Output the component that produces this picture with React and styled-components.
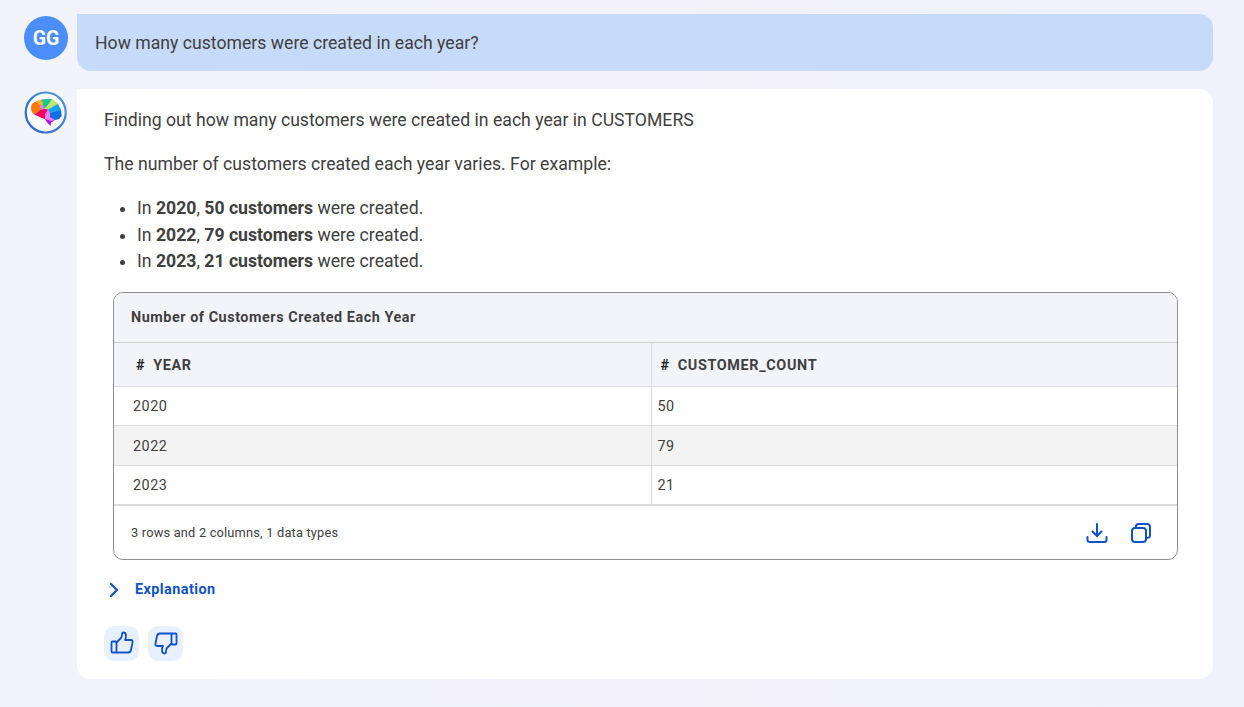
import styled, { createGlobalStyle } from "styled-components"

const rows = [
    { year: "2020", count: "50" },
    { year: "2022", count: "79" },
    { year: "2023", count: "21" },
]

const GlobalStyle = createGlobalStyle`
    html, body {
        margin: 0;
        padding: 0;
    }

    body {
        font-family: Roboto, "Liberation Sans", sans-serif;
        color: #404040;
    }

    * {
        box-sizing: border-box;
    }
`

function BrainLogo() {
    return (
        <svg width="44" height="44" viewBox="0 0 44 44">
            <defs>
                <linearGradient id="ring" x1="1" y1="0" x2="0" y2="1">
                    <stop offset="0" stopColor="#4f9bd6" />
                    <stop offset="1" stopColor="#2a62cf" />
                </linearGradient>
            </defs>
            <circle cx="21.7" cy="21.5" r="20" fill="#fff" stroke="url(#ring)" strokeWidth="2.2" />
            <path d="M7 17 L8 13 L12 10.5 L18 8.5 L28 8 L34 13 L37 19 L37.5 25 L35 28 L31 29 L27 31.5 L26.5 35 L23 31 L21 28 L18 27 L10.5 23.5 L8 21 Z" fill="#f47df0" />
            <path d="M7 17 L8 13 L12 10.5 L16 14 L16.5 19 L10.5 23.5 L8 21 Z" fill="#ff7a00" />
            <path d="M12 10.5 L18 8.5 L19 14 L16 14 Z" fill="#ffb11f" />
            <path d="M18 8.5 L28 8 L24 14 L20 18 L19 14 Z" fill="#0fc98a" />
            <path d="M28 8 L34 13 L24 18.5 L20 18 L24 14 Z" fill="#b8ea6a" />
            <path d="M34 13 L37 19 L26 22 L24 18.5 Z" fill="#10a6ee" />
            <path d="M26 22 L37 19 L37.5 25 L35 28 L31 29 L26 26 Z" fill="#0a6fe0" />
            <path d="M10.5 23.5 L16.5 19 L20 18 L24 18.5 L21 23 L21 28 L18 27 Z" fill="#f5005f" />
            <path d="M21 28 L27 30 L31 29 L27 31.5 L26.5 35 L23 31 Z" fill="#a813ea" />
        </svg>
    )
}

function DownloadIcon() {
    return (
        <svg width="22" height="22" viewBox="0 0 22 22" fill="none" stroke="#0f52c9" strokeWidth="2" strokeLinecap="round" strokeLinejoin="round">
            <path d="M11 2 V14" />
            <path d="M6.5 9.5 L11 14 L15.5 9.5" />
            <path d="M1.5 15 V18 Q1.5 20 3.5 20 H18.5 Q20.5 20 20.5 18 V15" />
        </svg>
    )
}

function CopyIcon() {
    return (
        <svg width="22" height="22" viewBox="0 0 22 22" fill="none" stroke="#0f52c9" strokeWidth="2" strokeLinecap="round" strokeLinejoin="round">
            <rect x="2" y="6" width="14" height="14" rx="3" />
            <path d="M6 6 V4.5 Q6 2 8.5 2 H17 Q20 2 20 5 V13.5 Q20 16 16 16" />
        </svg>
    )
}

function ThumbUp() {
    return (
        <svg width="24" height="24" viewBox="0 0 24 24" fill="none" stroke="#0f52c9" strokeWidth="1.8" strokeLinejoin="round" strokeLinecap="round">
            <rect x="1.5" y="10.5" width="5" height="11" rx="1" />
            <path d="M6.5 11.5 L11 7 Q12 5.5 12 4 V3 Q12 1.5 13.5 1.5 Q16 1.5 16 5 Q16 7 15 9 H21 Q23 9 22.5 11.5 L21 19 Q20.5 21.5 18 21.5 H6.5" />
        </svg>
    )
}

function ThumbDown() {
    return (
        <svg width="24" height="24" viewBox="0 0 24 24" fill="none" stroke="#0f52c9" strokeWidth="1.8" strokeLinejoin="round" strokeLinecap="round">
            <rect x="17.5" y="2.5" width="5" height="11" rx="1" />
            <path d="M17.5 12.5 L13 17 Q12 18.5 12 20 V21 Q12 22.5 10.5 22.5 Q8 22.5 8 19 Q8 17 9 15 H3 Q1 15 1.5 12.5 L3 5 Q3.5 2.5 6 2.5 H17.5" />
        </svg>
    )
}

function Chevron() {
    return (
        <svg width="12" height="16" viewBox="0 0 12 16" fill="none" stroke="#0f52c9" strokeWidth="2.2" strokeLinecap="round" strokeLinejoin="round">
            <path d="M3 2 L9 8 L3 14" />
        </svg>
    )
}

export default function App() {
    return (
        <PAGE>
            <GlobalStyle />

            <ROW>
                <AVATAR>GG</AVATAR>
                <QUESTION>How many customers were created in each year?</QUESTION>
            </ROW>

            <ROW>
                <LOGO>
                    <BrainLogo />
                </LOGO>

                <ANSWER>
                    <PARAGRAPH>Finding out how many customers were created in each year in CUSTOMERS</PARAGRAPH>
                    <PARAGRAPH>The number of customers created each year varies. For example:</PARAGRAPH>

                    <LIST>
                        {rows.map((row) => (
                            <li key={row.year}>
                                In <b>{row.year}</b>, <b>{row.count} customers</b> were created.
                            </li>
                        ))}
                    </LIST>

                    <TABLE_CARD>
                        <TABLE_TITLE>Number of Customers Created Each Year</TABLE_TITLE>

                        <TABLE>
                            <colgroup>
                                <col width="537" />
                                <col />
                            </colgroup>
                            <thead>
                                <tr>
                                    <HEAD_CELL $indent={22}><HASH>#</HASH>YEAR</HEAD_CELL>
                                    <HEAD_CELL $indent={9}><HASH>#</HASH>CUSTOMER_COUNT</HEAD_CELL>
                                </tr>
                            </thead>
                            <tbody>
                                {rows.map((row, index) => (
                                    <BODY_ROW key={row.year} $striped={index === 1}>
                                        <BODY_CELL $indent={19} $tall={index === 1}>{row.year}</BODY_CELL>
                                        <BODY_CELL $indent={6} $tall={index === 1}>{row.count}</BODY_CELL>
                                    </BODY_ROW>
                                ))}
                            </tbody>
                        </TABLE>

                        <TABLE_FOOTER>
                            <FOOTER_TEXT>3 rows and 2 columns, 1 data types</FOOTER_TEXT>
                            <TOOLS>
                                <DownloadIcon />
                                <CopyIcon />
                            </TOOLS>
                        </TABLE_FOOTER>
                    </TABLE_CARD>

                    <EXPLANATION>
                        <Chevron />
                        <span>Explanation</span>
                    </EXPLANATION>

                    <FEEDBACK>
                        <FEEDBACK_BUTTON aria-label="Like"><ThumbUp /></FEEDBACK_BUTTON>
                        <FEEDBACK_BUTTON aria-label="Dislike"><ThumbDown /></FEEDBACK_BUTTON>
                    </FEEDBACK>
                </ANSWER>
            </ROW>
        </PAGE>
    )
}

const PAGE = styled.div`
    width: 1244px;
    height: 707px;
    overflow: hidden;
    padding: 14px 31px 0 24px;
    display: flex;
    flex-direction: column;
    gap: 18px;
    background: linear-gradient(90deg, #f3f3fb 0%, #f3f2f9 60%, #eff1fc 100%);
`

const ROW = styled.div`
    display: flex;
    align-items: flex-start;
    gap: 9px;
`

const AVATAR = styled.div`
    width: 44px;
    height: 44px;
    margin-top: 2px;
    flex: none;
    display: flex;
    align-items: center;
    justify-content: center;
    border-radius: 50%;
    background: #4a8dfb;
    color: #ffffff;
    font-size: 19.5px;
    font-weight: 700;
`

const LOGO = styled.div`
    width: 44px;
    height: 44px;
    margin-top: 2px;
    flex: none;
`

const QUESTION = styled.div`
    flex: 1;
    height: 57px;
    padding-left: 18px;
    display: flex;
    align-items: center;
    background: #c6daf9;
    border-radius: 0 14px 14px 14px;
    font-size: 17.65px;
`

const ANSWER = styled.div`
    flex: 1;
    height: 590px;
    padding: 18.3px 35px 0 27px;
    background: #ffffff;
    border-radius: 0 14px 14px 14px;
    font-size: 17.65px;
    line-height: 26.4px;
`

const PARAGRAPH = styled.p`
    margin: 0 0 17.6px;
`

const LIST = styled.ul`
    margin: 0 0 17.7px;
    padding-left: 33px;

    li {
        height: 26.4px;
    }

    b {
        font-weight: 700;
    }
`

const TABLE_CARD = styled.div`
    margin-left: 9px;
    height: 268px;
    display: flex;
    flex-direction: column;
    border: 1px solid #8e8e8e;
    border-radius: 10px;
    overflow: hidden;
`

const TABLE_TITLE = styled.div`
    height: 49px;
    padding: 2px 0 0 17px;
    display: flex;
    align-items: center;
    background: #f3f3fa;
    font-size: 14.4px;
    font-weight: 700;
    letter-spacing: 0.54px;
`

const TABLE = styled.table`
    width: 100%;
    table-layout: fixed;
    border-collapse: collapse;
    font-size: 14.4px;
    letter-spacing: 0.5px;
`

const HEAD_CELL = styled.th`
    height: 44px;
    padding: 4px 0 0 ${(props) => props.$indent}px;
    background: #f3f3fa;
    border-top: 1px solid #cfcfcf;
    border-bottom: 1px solid #dcdcdc;
    text-align: left;
    font-weight: 700;
    letter-spacing: 0.65px;

    & + & {
        border-left: 1px solid #dcdcdc;
    }
`

const HASH = styled.span`
    margin-right: 8px;
    color: #222222;
`

const BODY_ROW = styled.tr`
    background: ${(props) => (props.$striped ? "#f3f3f3" : "#ffffff")};
`

const BODY_CELL = styled.td`
    height: ${(props) => (props.$tall ? 40 : 39)}px;
    padding: ${(props) => (props.$tall ? 4 : 2)}px 0 0 ${(props) => props.$indent}px;
    border-bottom: 1px solid #dcdcdc;

    & + & {
        border-left: 1px solid #dcdcdc;
    }
`

const TABLE_FOOTER = styled.div`
    flex: 1;
    padding: 0 25px 0 17px;
    display: flex;
    align-items: center;
    justify-content: space-between;
    border-top: 1px solid #dcdcdc;
    font-size: 12.8px;
    letter-spacing: 0.2px;
`

const FOOTER_TEXT = styled.span`
    margin-top: 2px;
`

const TOOLS = styled.div`
    display: flex;
    align-items: center;
    gap: 22px;
`

const EXPLANATION = styled.div`
    margin: 17px 0 0 4px;
    display: flex;
    align-items: center;
    gap: 15px;
    font-size: 14.4px;
    font-weight: 700;
    letter-spacing: 0.45px;
    color: #0f52c9;
`

const FEEDBACK = styled.div`
    margin-top: 22px;
    display: flex;
    gap: 9px;
`

const FEEDBACK_BUTTON = styled.button`
    width: 35px;
    height: 35px;
    padding: 0;
    display: flex;
    align-items: center;
    justify-content: center;
    border: none;
    border-radius: 10px;
    background: #e9f0fd;
`
